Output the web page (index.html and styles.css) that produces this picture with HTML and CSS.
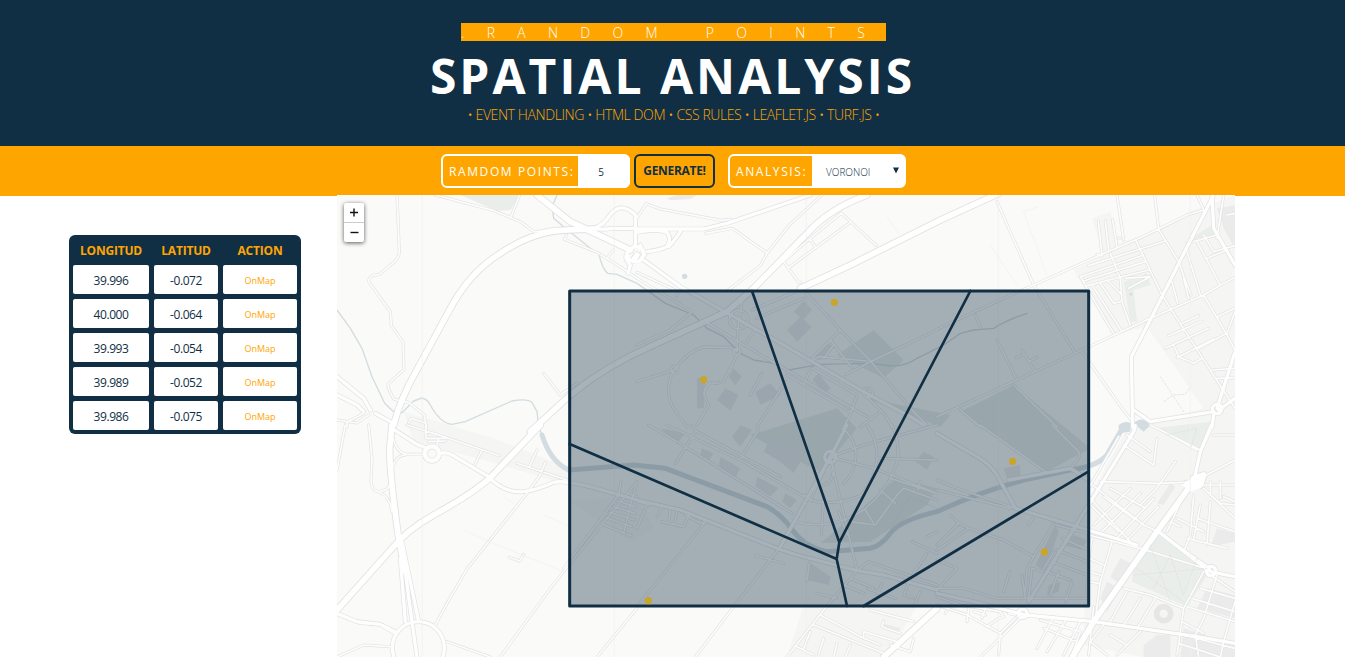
FILE: index.html
```html
<!DOCTYPE html>
<html lang="en">
<head>
<meta charset="utf-8">
<title>Spatial Analysis</title>
<link rel="stylesheet" href="styles.css">
</head>
<body>
<header class="header">
  <div class="kicker">.RANDOM POINTS</div>
  <h1 class="title">SPATIAL ANALYSIS</h1>
  <p class="topics">• EVENT HANDLING • HTML DOM • CSS RULES • LEAFLET.JS • TURF.JS •</p>
</header>
<section class="controls">
  <div class="field field-points"><span class="field-label">RAMDOM POINTS:</span><span class="count">5</span></div>
  <button class="generate">GENERATE!</button>
  <div class="field field-analysis"><span class="field-label">ANALYSIS:</span><span class="select"><span>VORONOI</span><svg class="caret" viewBox="0 0 6 7"><path d="M0 0.5H6L3 6.5Z"/></svg></span></div>
</section>
<main class="main">
  <aside class="side">
    <div class="table">
      <b>LONGITUD</b><b>LATITUD</b><b>ACTION</b>
      <span>39.996</span><span>-0.072</span><a>OnMap</a>
      <span>40.000</span><span>-0.064</span><a>OnMap</a>
      <span>39.993</span><span>-0.054</span><a>OnMap</a>
      <span>39.989</span><span>-0.052</span><a>OnMap</a>
      <span>39.986</span><span>-0.075</span><a>OnMap</a>
    </div>
  </aside>
  <div class="map">
    <svg class="tiles" viewBox="0 0 2694 1386">
      <defs>
        <g id="minor">
          <path d="M180 0L187 170Q186 190 165 207L127 238L105 242Q92 252 97 263L160 350L163 392L198 440L201 524L158 562Q150 570 155 582L170 612Q195 620 215 622L262 660L268 696M295 0L470 47L550 80L592 111L655 100L682 103M548 0L522 66M620 535L670 600L720 565M688 120L682 133L780 172L860 222L900 250M812 188L828 165M0 675L60 684L95 660M30 696V682L80 655M215 684L222 670L265 684"/>
          <g transform="translate(900 0)">
            <path d="M0 68L28 26L70 42L252 76L280 73M207 115L286 100L390 174M555 0L457 90L390 175L370 212L270 288M345 288L432 205L440 200L485 262L492 262M435 203L520 130L613 54L718 152M455 218L640 82M518 132L537 158M0 250L165 350L100 405L0 450M0 232L125 290L118 303M205 380L330 455L690 665M300 470L303 395L315 320M330 440L355 405M345 345L480 288M358 370L500 310M508 295L610 405L700 498L830 650M610 405L525 490M580 435L645 518M520 500L545 485L690 498M590 450L560 490M625 540L700 500L900 405M525 520L660 600L640 660L620 696M450 540L640 650M375 535L340 600M445 560L360 696M690 605L745 660L765 696M670 696L730 650M500 570L520 525M300 480L262 555Q245 570 220 562Q195 585 203 605L215 630L180 690M112 525Q150 470 200 456L280 457L300 470M112 525L0 560M108 530Q80 590 110 640L150 696M830 650L870 690"/>
            <circle cx="305" cy="374" r="28"/><circle cx="300" cy="470" r="9"/><circle cx="112" cy="524" r="10"/><circle cx="693" cy="593" r="14"/>
          </g>
          <g transform="translate(1800 0)">
            <path d="M180 20L290 270L412 470M0 403L200 310L290 270L490 180L600 133L700 85L750 60L800 45M0 665L240 555L435 465L640 370M230 570L360 696M70 645L130 696M435 470L555 640L580 672M180 435L238 550M255 465L293 528M238 488L262 478M275 500L298 488M115 360L130 395M540 0L560 135M653 0L665 103L725 200L750 270L762 300M780 0L805 55M484 80L495 180M505 78L515 165M527 75L540 158M550 130L545 130M495 183L480 178M595 133L675 300L700 340L765 440L855 580M455 212L600 165L685 138M430 245L620 180M440 258L625 200M450 272L635 225M520 175L550 250L555 320L580 390M430 245L450 280L530 415M465 270L555 410M490 265L530 325L555 318M510 255L555 300M565 250L640 245L575 280M705 260L722 325M750 170L790 300M740 250L755 310M780 140L850 270L900 245M800 120L830 170L900 150M810 190L870 165M770 140L840 120M640 370L800 300L850 270M800 300L870 420L894 465M735 385L785 362M695 422L795 378M685 460L815 400M720 488L830 432M710 450L725 485L770 505L795 490M780 462L870 415L894 350M840 365L894 340M825 525L894 520M840 550L894 548M855 580L894 640M860 0L840 130M870 60L894 55"/>
          </g>
          <g transform="translate(0 690)">
            <path d="M25 0L0 135M95 0L105 100L102 170Q105 198 125 200Q155 195 158 180M168 40Q180 85 210 88L265 88M165 165Q160 95 205 90M125 200Q160 215 165 260M210 0L330 38L487 92M267 0V40L325 40M275 50L325 48M300 60L305 40M435 75L413 120M540 115L690 165M600 75L577 125M625 112L610 150L570 205L390 432L330 535L295 600M900 170L700 415L640 490L490 696M852 170L845 210L680 430M897 182L880 240L860 325M840 228L895 245M830 245L895 265M818 262L892 285M808 278L885 305M795 298L882 332M870 205L900 215M0 566L70 595L140 600L180 620M0 696L80 660L160 665M330 650L460 696M517 397L548 408L560 388M900 550L780 696"/>
            <circle cx="285" cy="86" r="17"/>
          </g>
          <g transform="translate(900 690)">
            <path d="M35 0L120 50L465 265M90 0L320 110L500 215M175 20L115 115M365 15L310 100M160 0L180 20L430 155M500 210L520 225Q590 245 670 212Q710 175 720 100Q720 40 690 0M470 290Q590 320 685 250Q760 190 783 100Q785 40 765 0M580 96Q605 200 660 437M580 96L710 130L900 205M580 96L520 225M580 96L680 60L900 0M620 175Q665 130 655 70Q645 30 615 10M590 125Q590 170 560 180M560 210L553 330M630 330L605 260M710 295L685 255M775 235L730 195M720 100L900 105M760 160L900 205M640 290L715 300L780 210L800 190L900 225M850 170L843 195M205 290L0 545M30 240L0 310M0 230L40 240M60 275L75 245M75 290L140 305L155 270M100 255L95 290M120 260L112 295M145 270L190 295L205 290M425 372L290 545L175 696M355 392L440 415M517 415L510 468M660 437L560 555L450 696M660 437L695 410L900 480M540 505L600 520M620 480L680 505M640 460L710 490M690 490L775 520M735 475L720 510M825 350L900 385M870 385L820 460L800 510L830 520M870 335L900 320M850 500L830 545M550 570L680 640L730 660M530 600L740 685M520 620L500 670M560 640L545 690M480 665L530 690M680 640V620L780 650M600 655L590 696M640 660L625 696M735 605L740 588M735 605L790 625M830 640L820 680L760 660M700 555L830 590"/>
          </g>
          <g transform="translate(1800 690)">
            <path d="M130 0L325 140M345 0L425 80Q430 90 425 100L405 125M0 165L60 190L235 250M0 195L220 250M0 360L65 295L95 310L0 375M40 270L65 295M95 310L200 345L290 395M350 295L290 395L270 430L265 500M355 300L455 325M285 430L315 440L350 380M375 340L455 375M360 375L450 410M345 410L450 450M330 440L400 465M365 440L340 510M405 470L385 530M0 405L60 430L10 485M0 490L80 490L180 520L450 520M0 515L70 540L190 560M218 440L200 500M255 450L265 520M285 430L275 520M275 300L290 275M460 175L620 300L665 320L820 430M455 215L580 350M490 170L670 175L740 172M560 60L650 120L660 40M545 35L490 130L455 190M570 30L640 80M640 0L790 75L820 0M700 30L780 75M830 30H894M790 160L894 105M785 180H894M800 190L894 280M770 210L760 330L740 380M820 170V210L850 235L894 240M850 170V220M860 215L894 230M745 200L690 320M720 280L800 320M455 330L610 370L820 435M460 240L545 320M500 215L590 280M520 190L625 250M470 300L580 190M495 320L610 205M540 340L650 220M570 345L665 245M715 110L655 195L610 240M790 240L770 340M820 230L810 360M780 280L894 320M750 340L870 370M700 290L730 305M525 350L490 470L475 580M455 400L500 420M455 440L490 450M455 470L485 475M465 340L455 400M560 490L640 510L740 550L800 440M570 500L520 590M610 520L560 600M655 520L600 610M740 550L720 690M735 590L800 625M750 545L894 590M765 520L894 560M790 490L894 520M820 450L894 500M840 450L800 580L775 630L785 696M740 630L894 670M725 655L850 696M894 530L860 650L850 696M310 585L430 620L405 690M350 575L300 670M390 580L330 680M430 590L380 690M320 610L420 650M500 600L460 650L510 690M520 630L570 660M0 540L90 570L190 625L185 690M40 540L25 565M95 550L90 590M145 550L135 580M190 560L200 575L185 580L150 605M110 560L145 570M215 565L235 570M190 625L235 580M130 696L260 570M470 545L455 690M610 620L540 690"/>
          </g>
        </g>
        <g id="mid">
          <path d="M0 545L80 610L100 645M0 600L60 630L80 650M115 655L160 680M770 100Q800 90 815 65Q850 15 895 60V150L870 175Q860 190 880 210L873 235"/>
          <path d="M765 100Q800 105 825 100H900"/>
          <g transform="translate(900 0)">
            <path d="M0 102H200L270 85L520 0M0 112Q60 100 90 112Q105 130 90 155Q70 165 30 170M130 110Q110 140 95 155M20 195L130 275L440 450L560 520L670 585L820 665L860 690M10 150L22 180"/>
          </g>
          <g transform="translate(1800 0)">
            <path d="M830 0L720 215L650 355L583 485L587 696M825 0L830 100L894 210M590 645L640 680L830 650M840 640L894 470M845 645L894 610M830 660L825 696"/><circle cx="840" cy="642" r="14"/>
          </g>
          <g transform="translate(0 690)">
            <path d="M165 10L240 58L265 68M310 85Q330 80 345 90L455 155Q500 205 560 200Q600 195 650 172Q675 165 760 185L900 225"/><circle cx="285" cy="86" r="23"/><circle cx="244" cy="668" r="78"/>
            <path d="M205 440L225 590L240 696M190 400L205 590M195 350L245 590M0 566L60 590L130 598L175 625"/>
          </g>
          <g transform="translate(900 690)">
            <path d="M0 225L130 255L425 372L480 390L660 437L740 450L900 495M630 0L580 96L430 365"/>
            <circle cx="580" cy="96" r="17"/>
          </g>
          <g transform="translate(1800 690)">
            <path d="M0 25L120 95Q165 120 185 160L235 250L420 305L600 360M215 165L400 130L455 165M0 505L110 530L265 570L470 590L610 610L780 635L894 655M590 10Q600 -10 590 20L455 240L275 530M825 0L790 80L770 170M820 440L780 410L665 320M820 440L894 455"/>
            <circle cx="257" cy="565" r="13"/><circle cx="822" cy="438" r="14"/>
          </g>
        </g>
        <g id="major">
          <path d="M170 690Q190 610 245 515L340 340Q400 230 490 175Q590 108 690 105L770 102M600 0L700 80L880 165M580 710L700 600Q810 510 950 450L1170 350L1250 280L1415 110Q1480 40 1590 0M1390 280L1530 215L1800 80L1985 -5M900 180L890 195M165 690L158 760Q158 840 185 1030L205 1130M610 690L458 850Q400 900 290 960Q210 1005 165 1060L0 1245M1820 545"/>
          <path d="M1800 1240L1640 1386M2206 1386L2270 1280L2460 1010L2565 865M2570 850L2600 840L2590 870L2550 865"/>
          <path d="M870 175Q880 155 900 155Q925 165 920 180Q910 205 890 200Q870 195 870 175" stroke-width="10"/>
        </g>
      </defs>
      <rect class="land" width="2694" height="1386"/>
      <path class="urban" d="M2265 70L2320 50L2345 145L2460 105L2560 50L2694 0V1386H2420L2240 1350L2250 920L2370 700L2600 640L2430 395L2325 420L2210 225L2300 180ZM200 650L470 730L700 820L690 870L460 800L230 740ZM700 920L880 1040L950 1000L900 900ZM1400 1233H1740L1650 1386H1350Z"/>
      <path class="park" d="M370 0H550L520 45L480 48ZM1500 480L1610 405L1700 495L1640 550ZM1870 650L2030 570L2260 760L2130 830ZM1240 720L1500 640L1560 700L1450 830L1350 780ZM2360 260L2430 235L2440 270L2390 285L2400 380L2380 380ZM2390 1120L2465 1020L2620 1125L2550 1235L2385 1160ZM2450 700L2620 680L2585 770ZM2540 145L2625 90L2640 120ZM1680 850L1800 880L1770 930L1600 1040L1450 1045ZM1590 610L1840 660L1810 696Z"/>
      <path class="building" d="M1370 350L1400 318L1426 345L1398 375ZM1350 405L1390 365L1425 395L1380 440ZM1105 548H1080V640H1100ZM1140 615L1165 580L1205 600L1180 648ZM1190 520L1215 545L1195 570L1175 545ZM1255 590L1300 565L1330 600L1270 630ZM1425 555L1445 535L1480 580L1465 595ZM1425 490L1475 445L1490 455L1450 495ZM970 700L1045 715L1020 745ZM1095 760L1130 775L1115 800L1090 785ZM1150 785L1210 820L1195 850L1145 820ZM1260 845L1325 880L1300 905L1255 875ZM1345 895L1380 915L1360 940L1335 920ZM1185 725L1210 690L1245 705L1210 755ZM1280 770L1300 730L1350 760L1390 800L1370 835L1330 800ZM1735 800L1760 770L1790 785L1770 825ZM1415 1100L1480 1145L1475 1170L1410 1155ZM2000 820L2050 810V850H2010ZM2095 1110L2155 990L2165 1010L2125 1130ZM2180 1050L2210 1020L2250 1035L2235 1065ZM2135 1170L2170 1160L2165 1190L2130 1200ZM2460 925L2500 865L2515 875L2480 930ZM2320 1145L2350 1090L2395 1110L2350 1170ZM2290 1210L2310 1160L2350 1180L2310 1250ZM2620 1055L2640 1000L2694 1015V1040ZM2580 1240L2610 1180L2694 1200V1270ZM2420 1386V1350L2460 1320H2500V1386ZM2540 1300L2694 1350V1386H2530ZM2640 40L2694 30V160L2660 100ZM990 10L1020 0H1080L1060 12L1000 16ZM1635 1285L1690 1300L1680 1315L1635 1300Z"/>
      <g class="stream">
        <path d="M0 345L40 400L75 460L105 545L143 625L170 650L195 653L230 618L255 609Q272 613 280 630Q310 685 345 688L385 680L525 618Q570 610 585 622L600 650L605 696L617 725M660 0L645 35L650 70L680 95L760 160L785 175Q795 220 812 235L840 238L900 265L985 325L1070 360L1110 400L1160 425L1210 475L1250 495L1310 505L1355 525L1450 508L1600 505L1640 510Q1700 520 1740 490L1820 450L1870 415L1910 405L1970 400Q2010 375 2070 355"/>
      </g>
      <path class="river" d="M615 720Q640 800 695 825L890 810L985 820L1290 935Q1335 960 1370 1010Q1410 1060 1470 1070L1600 1060Q1630 1055 1660 1015Q1690 975 1800 950Q1930 890 2060 855L2200 825Q2280 815 2310 780L2350 710Q2380 680 2430 690"/>
      <circle class="pond" cx="1043" cy="244" r="8"/><circle class="pond" cx="2382" cy="298" r="4"/>
      <path class="pond" d="M2345 690Q2365 675 2380 685V710L2345 715ZM2390 685Q2415 660 2440 690L2420 710Z"/>
      <use href="#minor" class="minor-case"/><use href="#mid" class="mid-case"/><use href="#major" class="major-case"/>
      <use href="#minor" class="minor-road"/><use href="#mid" class="mid-road"/><use href="#major" class="major-road"/>
      <path class="plaza" d="M2535 870L2570 845L2600 855L2590 880L2560 890Z"/>
      <circle class="ring" cx="2480" cy="1256" r="21"/>
      <path class="trail" d="M2470 545L2540 650M2480 620L2510 600L2545 598L2560 575M2400 1120L2540 1220M2440 1050L2500 1220M2390 1140L2610 1120M2450 1180L2500 1080L2540 1200L2580 1090M2490 720L2580 700L2560 760M1660 1000L1720 905L1800 940"/>
      <path class="track" d="M2060 50L2105 35M2060 50L2130 240M1960 150L2040 270M1650 65L1686 118M380 1005L480 1050L680 1130M620 960L700 995M500 905L530 925"/>
      <path class="seam" d="M256 0V1386M832 0V1386M1408 0V1386M1984 0V1386M2560 0V1386"/>
      <rect class="zone" x="698" y="288" width="1557" height="945"/>
      <path class="edge" d="M1245 288L1507 1042L1900 288M1507 1042L1499 1092L1530 1233M1499 1092L698 747M1580 1233L2255 829"/>
      <g class="points"><circle cx="1492" cy="322" r="11"/><circle cx="1100" cy="554" r="11"/><circle cx="934" cy="1217" r="11"/><circle cx="2027" cy="799" r="11"/><circle cx="2122" cy="1071" r="11"/></g>
    </svg>
    <div class="zoom">
      <svg viewBox="0 0 20 19"><path d="M6 9.5H14M10 5.5V13.5"/></svg>
      <svg viewBox="0 0 20 19"><path d="M6.5 9.5H14.5"/></svg>
    </div>
  </div>
</main>
</body>
</html>
```
FILE: styles.css
```css
* { box-sizing: border-box; }
body { margin: 0; width: 1345px; height: 657px; overflow: hidden; background: #fff; color: #102f44; font-family: "Open Sans", "Noto Sans", sans-serif; }
.header { height: 146px; background: #102f44; padding-top: 23px; display: flex; flex-direction: column; align-items: center; }
.kicker { width: 425px; height: 18px; margin-left: 2px; background: #ffa500; color: #fff; font-size: 14px; font-weight: 300; line-height: 20px; letter-spacing: 22.3px; white-space: nowrap; overflow: hidden; }
.title { margin: 8px 0 0; height: 54px; line-height: 54px; font-size: 48px; font-weight: 700; letter-spacing: 3px; color: #fff; white-space: nowrap; }
.topics { margin: 2px 0 0 2px; line-height: 20px; font-size: 14px; font-weight: 300; letter-spacing: -0.4px; color: #ffa500; white-space: nowrap; }
.controls { height: 50px; background: #ffa500; padding: 8px 0 0 441px; display: flex; align-items: flex-start; }
.field { display: flex; height: 34px; border: 2px solid #fff; border-radius: 6px; }
.field-points { width: 189px; }
.field-analysis { width: 178px; margin-left: 13px; }
.field-label { padding-left: 6px; line-height: 31px; font-size: 12px; font-weight: 400; letter-spacing: 1.6px; color: #fff; white-space: nowrap; }
.field-points .field-label { width: 135px; }
.field-analysis .field-label { width: 82px; }
.count { width: 52px; height: 33px; margin: -1px -2px 0 0; padding-right: 6px; background: #fff; border-radius: 0 5px 6px 0; font-size: 10px; line-height: 34px; text-align: center; flex: none; }
.select { width: 92px; background: #fff; display: flex; justify-content: space-between; padding: 0 5px 0 14px; font-size: 10px; font-weight: 300; line-height: 33px; }
.caret { width: 6px; height: 7px; margin-top: 11px; fill: #102f44; }
.generate { width: 81px; height: 34px; margin-left: 4px; padding: 0; border: 2px solid #102f44; border-radius: 6px; background: none; color: #102f44; font: 700 12px/30px "Open Sans", sans-serif; letter-spacing: -0.3px; }
.main { display: flex; margin-top: -1px; height: 462px; }
.side { width: 337px; padding: 40px 0 0 69px; }
.table { width: 232px; height: 199px; padding: 0 4px 4px; display: grid; grid-template-columns: 76px 64px 74px; grid-template-rows: 25px repeat(5, 29px); gap: 5px; border-radius: 6px; background: #102f44; text-align: center; }
.table b { font-size: 12px; line-height: 32px; color: #ffa500; letter-spacing: -0.2px; }
.table span, .table a { background: #fff; border-radius: 2px; line-height: 31px; }
.table span { font-size: 12px; letter-spacing: -0.4px; }
.table a { color: #ffa500; font-size: 9px; }
.map { position: relative; width: 898px; height: 462px; overflow: hidden; }
.tiles { display: block; width: 898px; height: 462px; fill: none; stroke-linejoin: round; stroke-linecap: round; }
.land { fill: #fafaf8; }
.urban { fill: #f5f5f4; }
.park { fill: #e9eeeb; }
.building { fill: #ebebeb; }
.stream { stroke: #d3dce1; stroke-width: 4; }
.river { stroke: #d3dce1; stroke-width: 15; }
.pond { fill: #d3dce1; }
.minor-case { stroke: #e3e3e3; stroke-width: 9; }
.minor-road { stroke: #fdfdfd; stroke-width: 5; }
.mid-case { stroke: #e1e1e1; stroke-width: 14; }
.mid-road { stroke: #fefefe; stroke-width: 10; }
.major-case { stroke: #e1e1e1; stroke-width: 22; }
.major-road { stroke: #fff; stroke-width: 17; }
.plaza { fill: #fff; }
.ring { stroke: #e6e6e6; stroke-width: 17; }
.trail { stroke: #dedede; stroke-width: 2; stroke-dasharray: 7 5; }
.track { stroke: #f0f0f0; stroke-width: 2; }
.seam { stroke: #f0f0ef; stroke-width: 2; }
.zone { fill: #102f44; fill-opacity: 0.37; stroke: #102f44; stroke-width: 9; }
.edge { stroke: #102f44; stroke-width: 8; }
.points { fill: #c8a52b; }
.zoom { position: absolute; left: 7px; top: 8px; width: 20px; height: 39px; border-radius: 2px; background: #fff; box-shadow: 0 1px 4px rgba(0, 0, 0, 0.65); }
.zoom svg { display: block; width: 20px; height: 19px; stroke: #111; stroke-width: 1.4; }
.zoom svg + svg { height: 20px; border-top: 1px solid #ccc; }
```
